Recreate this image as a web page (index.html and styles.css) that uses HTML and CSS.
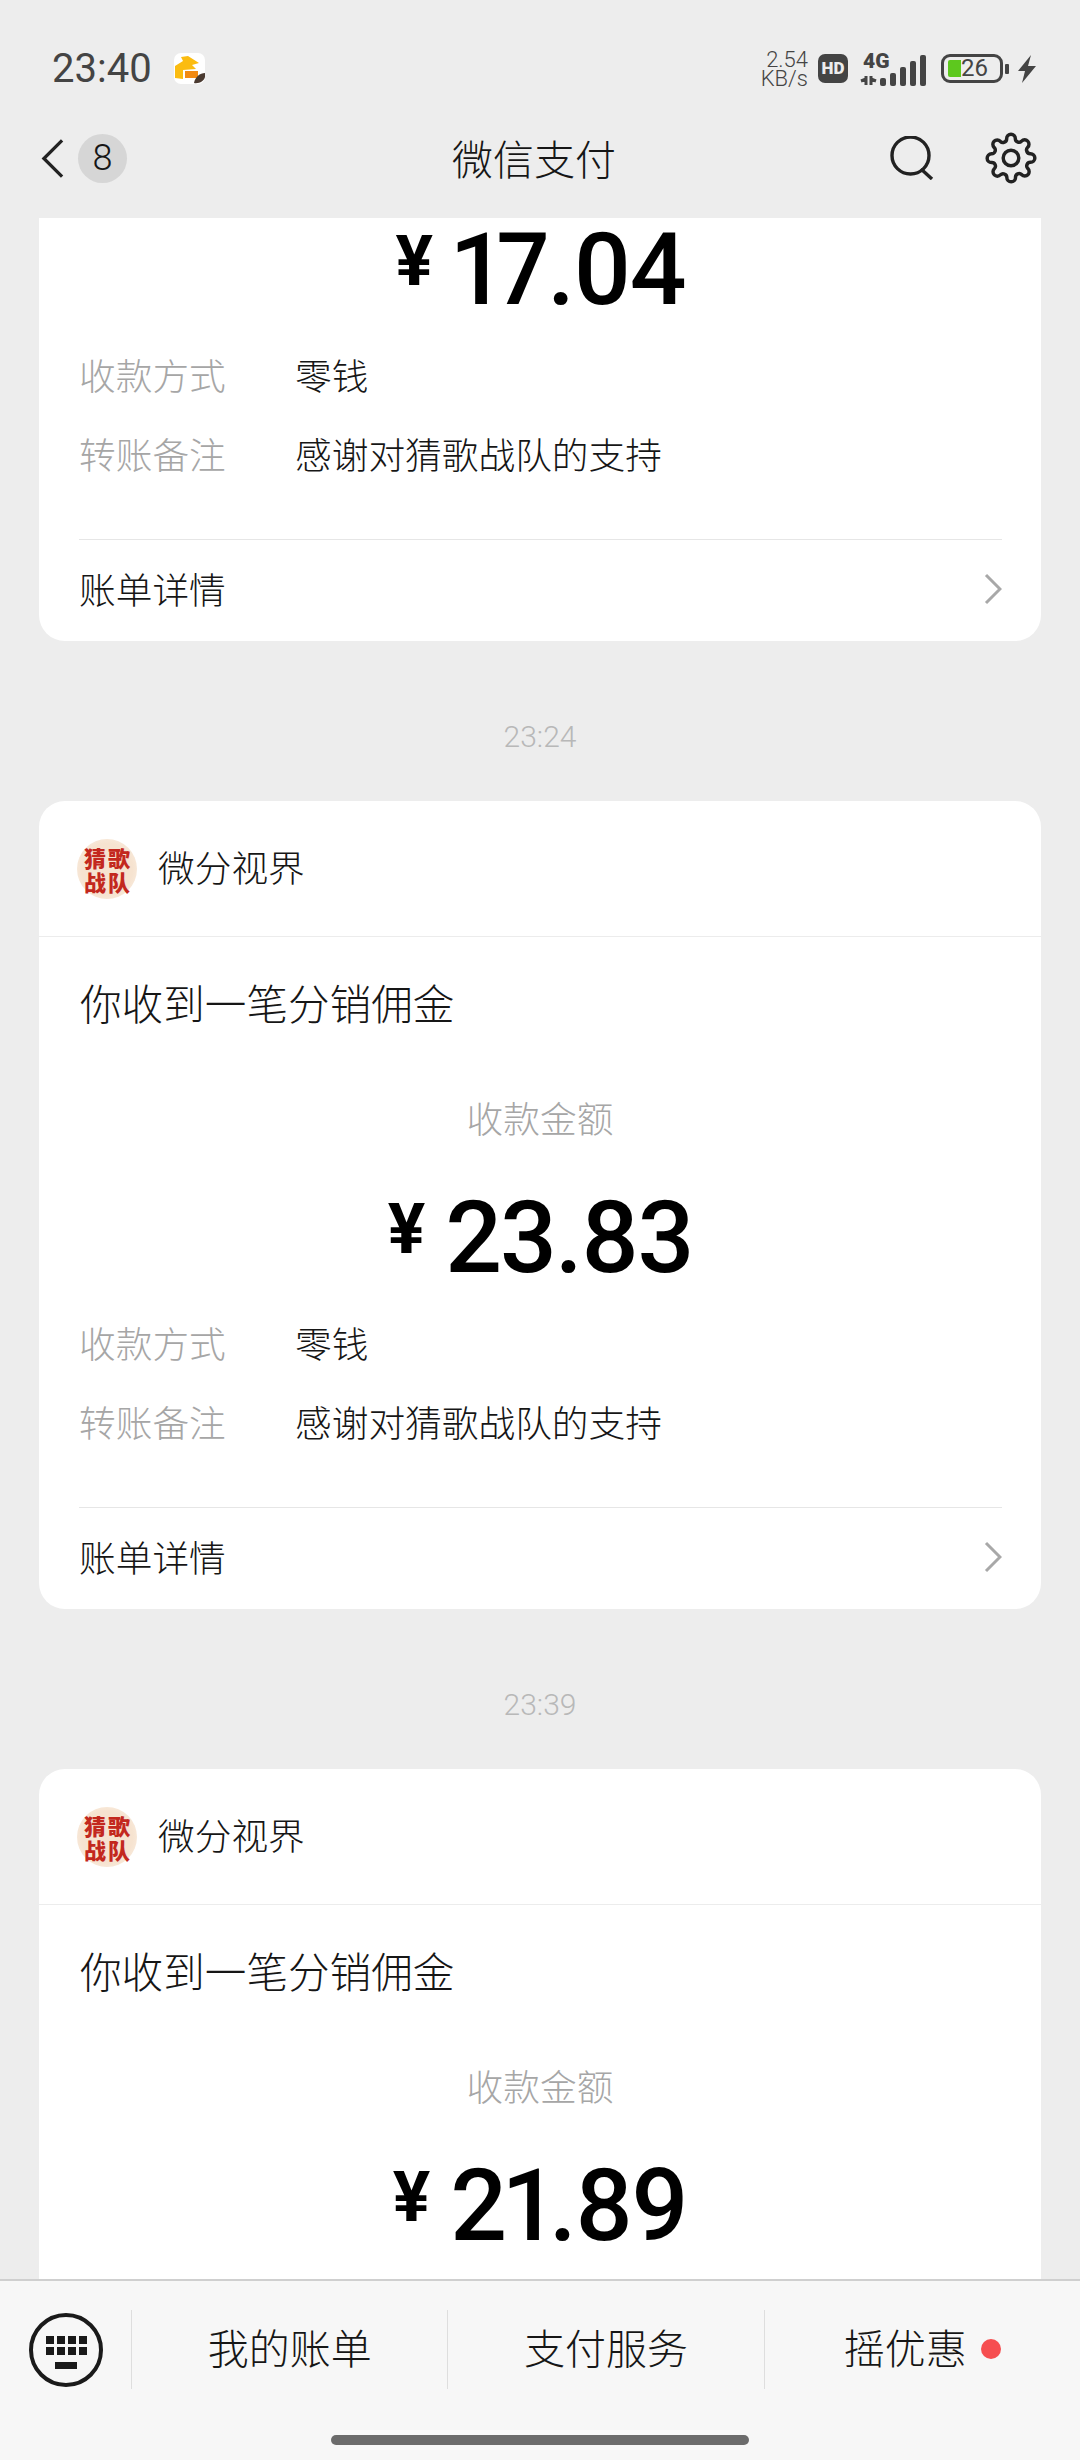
FILE: index.html
```html
<!DOCTYPE html>
<html lang="zh-CN">
<head>
  <meta charset="UTF-8" />
  <meta name="viewport" content="width=device-width, initial-scale=1.0" />
  <title>微信支付</title>
  <link rel="stylesheet" href="styles.css">
</head>
<body>
  <div class="top">
    <div class="status">
      <div class="status-left">
        <span class="clock">23:40</span>
        <svg class="app-icon" viewBox="0 0 31 31">
          <rect width="31" height="31" rx="7" fill="#fff"/>
          <path d="M1 13 L9 8 L7 4 L14 3 L25 10 L18 12 L22 16 L9 17 L9 26 L1 25 Z" fill="#fbbc10"/>
          <rect x="11" y="18" width="13" height="7" fill="#f28a12"/>
          <path d="M20 30 C21 24 26 20 31 20 L31 24 C30 28 25 31 20 30 Z" fill="#4a3a30"/>
        </svg>
      </div>
      <div class="status-right">
        <div class="speed"><span>2.54</span><span>KB/s</span></div>
        <div class="hd">HD</div>
        <svg class="signal" viewBox="0 0 68 34">
          <text x="3" y="16" class="signal-text">4G</text>
          <path d="M6 24 V33 M6 27 L1 29 M11 24 V33 M11 27 L16 29" stroke="#444" stroke-width="3" fill="none"/>
          <rect x="20" y="26" width="6" height="8" rx="2" fill="#444"/>
          <rect x="30" y="21" width="6" height="13" rx="2" fill="#444"/>
          <rect x="40" y="15" width="6" height="19" rx="2" fill="#444"/>
          <rect x="50" y="9" width="6" height="25" rx="2" fill="#444"/>
          <rect x="60" y="3" width="6" height="31" rx="2" fill="#444"/>
        </svg>
        <div class="battery">
          <div class="battery-fill"></div>
          <span class="battery-num">26</span>
        </div>
        <div class="battery-nub"></div>
        <svg class="bolt" viewBox="0 0 19 28">
          <path d="M14 0 L1 16 L8 16 L5 28 L19 11 L11 11 Z" fill="#444"/>
        </svg>
      </div>
    </div>
    <div class="nav">
      <div class="nav-left">
        <svg class="back" viewBox="0 0 24 42">
          <path d="M22 2 L3 21 L22 40" fill="none" stroke="#222" stroke-width="3.4"/>
        </svg>
        <span class="badge">8</span>
      </div>
      <div class="nav-title">微信支付</div>
      <div class="nav-right">
        <svg class="search" viewBox="0 0 44 44">
          <circle cx="20.5" cy="19.5" r="18.5" fill="none" stroke="#222" stroke-width="3.4"/>
          <path d="M31 33 L42 43" stroke="#222" stroke-width="3.4"/>
        </svg>
        <svg class="gear" viewBox="0 0 24 24" fill="none" stroke="#222" stroke-width="1.6">
          <circle cx="12" cy="12" r="3.6"/>
          <path d="M19.4 15a1.65 1.65 0 0 0 .33 1.82l.06.06a2 2 0 0 1 0 2.83 2 2 0 0 1-2.83 0l-.06-.06a1.65 1.65 0 0 0-1.82-.33 1.65 1.65 0 0 0-1 1.51V21a2 2 0 0 1-2 2 2 2 0 0 1-2-2v-.09A1.65 1.65 0 0 0 9 19.4a1.65 1.65 0 0 0-1.82.33l-.06.06a2 2 0 0 1-2.83 0 2 2 0 0 1 0-2.83l.06-.06a1.65 1.65 0 0 0 .33-1.82 1.65 1.65 0 0 0-1.51-1H3a2 2 0 0 1-2-2 2 2 0 0 1 2-2h.09A1.65 1.65 0 0 0 4.6 9a1.65 1.65 0 0 0-.33-1.82l-.06-.06a2 2 0 0 1 0-2.83 2 2 0 0 1 2.83 0l.06.06a1.65 1.65 0 0 0 1.82.33H9a1.65 1.65 0 0 0 1-1.51V3a2 2 0 0 1 2-2 2 2 0 0 1 2 2v.09a1.65 1.65 0 0 0 1 1.51 1.65 1.65 0 0 0 1.82-.33l.06-.06a2 2 0 0 1 2.83 0 2 2 0 0 1 0 2.83l-.06.06a1.65 1.65 0 0 0-.33 1.82V9a1.65 1.65 0 0 0 1.51 1H21a2 2 0 0 1 2 2 2 2 0 0 1-2 2h-.09a1.65 1.65 0 0 0-1.51 1z"/>
        </svg>
      </div>
    </div>
  </div>

  <div class="feed">
    <div class="card first">
      <div class="card-head">
        <div class="avatar"><span>猜</span><span>歌</span><span>战</span><span>队</span></div>
        <span class="sender">微分视界</span>
      </div>
      <div class="card-title">你收到一笔分销佣金</div>
      <div class="amount-label">收款金额</div>
      <div class="amount"><span class="yen">¥</span><span class="digits">17.04</span></div>
      <div class="row"><span class="row-key">收款方式</span><span class="row-val">零钱</span></div>
      <div class="row row-2"><span class="row-key">转账备注</span><span class="row-val">感谢对猜歌战队的支持</span></div>
      <div class="detail">
        <span>账单详情</span>
        <svg class="chevron" viewBox="0 0 18 32"><path d="M2 2 L16 16 L2 30" fill="none" stroke="#a8a8a8" stroke-width="3"/></svg>
      </div>
    </div>

    <div class="time">23:24</div>

    <div class="card">
      <div class="card-head">
        <div class="avatar"><span>猜</span><span>歌</span><span>战</span><span>队</span></div>
        <span class="sender">微分视界</span>
      </div>
      <div class="card-title">你收到一笔分销佣金</div>
      <div class="amount-label">收款金额</div>
      <div class="amount"><span class="yen">¥</span><span class="digits">23.83</span></div>
      <div class="row"><span class="row-key">收款方式</span><span class="row-val">零钱</span></div>
      <div class="row row-2"><span class="row-key">转账备注</span><span class="row-val">感谢对猜歌战队的支持</span></div>
      <div class="detail">
        <span>账单详情</span>
        <svg class="chevron" viewBox="0 0 18 32"><path d="M2 2 L16 16 L2 30" fill="none" stroke="#a8a8a8" stroke-width="3"/></svg>
      </div>
    </div>

    <div class="time">23:39</div>

    <div class="card">
      <div class="card-head">
        <div class="avatar"><span>猜</span><span>歌</span><span>战</span><span>队</span></div>
        <span class="sender">微分视界</span>
      </div>
      <div class="card-title">你收到一笔分销佣金</div>
      <div class="amount-label">收款金额</div>
      <div class="amount"><span class="yen">¥</span><span class="digits">21.89</span></div>
      <div class="row"><span class="row-key">收款方式</span><span class="row-val">零钱</span></div>
    </div>
  </div>

  <div class="bottom">
    <div class="tabs">
      <div class="kb-cell">
        <svg class="keyboard" viewBox="0 0 74 74">
          <circle cx="37" cy="37" r="35" fill="none" stroke="#1a1a1a" stroke-width="4"/>
          <g fill="#1a1a1a">
            <rect x="17" y="23" width="8" height="8"/><rect x="28" y="23" width="8" height="8"/><rect x="39" y="23" width="8" height="8"/><rect x="50" y="23" width="8" height="8"/>
            <rect x="17" y="34" width="8" height="8"/><rect x="28" y="34" width="8" height="8"/><rect x="39" y="34" width="8" height="8"/><rect x="50" y="34" width="8" height="8"/>
            <rect x="26" y="49" width="22" height="7"/>
          </g>
        </svg>
      </div>
      <div class="tab">我的账单</div>
      <div class="tab">支付服务</div>
      <div class="tab">摇优惠<span class="dot"></span></div>
    </div>
    <div class="home-bar"></div>
  </div>
</body>
</html>
```

FILE: styles.css
```css
* {
  box-sizing: border-box;
}
html, body {
  margin: 0;
  height: 100%;
}
body {
  width: 1080px;
  height: 2460px;
  display: flex;
  flex-direction: column;
  overflow: hidden;
  background: #ededed;
  color: #161616;
  font-family: "Noto Sans CJK SC", "Noto Sans", sans-serif;
  font-weight: 300;
}

/* top bars */
.top {
  height: 218px;
  padding-top: 53px;
  background: #ededed;
  position: relative;
  z-index: 1;
}
.status {
  height: 31px;
  padding: 0 44px 0 52px;
  display: flex;
  justify-content: space-between;
  align-items: center;
}
.status-left {
  display: flex;
  align-items: center;
  gap: 22px;
}
.clock {
  font: 400 40px/31px Roboto, sans-serif;
  color: #444;
}
.app-icon {
  width: 31px;
  height: 31px;
}
.status-right {
  display: flex;
  align-items: center;
}
.speed {
  display: flex;
  flex-direction: column;
  align-items: flex-end;
  font: 300 22px/19px Roboto, sans-serif;
  color: #444;
  margin-right: 10px;
}
.hd {
  width: 30px;
  height: 29px;
  background: #444;
  border-radius: 7px;
  color: #ededed;
  font: 900 17px/29px Roboto, sans-serif;
  text-align: center;
  margin-right: 12px;
}
.signal {
  width: 68px;
  height: 34px;
  margin-right: 13px;
}
.signal-text {
  font: 900 21px Roboto, sans-serif;
  fill: #444;
}
.battery {
  width: 62px;
  height: 29px;
  border: 3px solid #444;
  border-radius: 9px;
  display: flex;
  align-items: center;
  padding-left: 4px;
}
.battery-fill {
  width: 13px;
  height: 17px;
  background: #5dc81e;
  border-radius: 2px 0 0 2px;
}
.battery-num {
  font: 400 24px/23px Roboto, sans-serif;
  color: #444;
}
.battery-nub {
  width: 4px;
  height: 10px;
  background: #444;
  border-radius: 1px;
  margin: 0 8px 0 2px;
}
.bolt {
  width: 19px;
  height: 28px;
}
.nav {
  margin-top: 34px;
  height: 80px;
  padding: 0 43px 0 41px;
  display: grid;
  grid-template-columns: 1fr auto 1fr;
  align-items: center;
}
.nav-left {
  display: flex;
  align-items: center;
  gap: 14px;
}
.back {
  width: 23px;
  height: 41px;
}
.badge {
  width: 49px;
  height: 49px;
  border-radius: 50%;
  background: #d6d6d6;
  font: 300 36px/49px Roboto, sans-serif;
  text-align: center;
}
.nav-title {
  font-size: 41px;
  line-height: 60px;
  margin-right: 10px;
  padding-bottom: 3px;
}
.nav-right {
  display: flex;
  justify-content: flex-end;
  align-items: center;
  gap: 51px;
}
.search {
  width: 44px;
  height: 44px;
}
.gear {
  width: 52px;
  height: 52px;
}

/* message list */
.feed {
  flex: 1;
  min-height: 0;
  overflow: hidden;
  padding: 0 39px;
}
.card {
  height: 808px;
  background: #fff;
  border-radius: 26px;
  overflow: hidden;
}
.card.first {
  margin-top: -385px;
}
.card-head {
  height: 136px;
  padding-left: 38px;
  display: flex;
  align-items: center;
  gap: 21px;
  border-bottom: 1px solid #ececec;
}
.avatar {
  width: 60px;
  height: 60px;
  border-radius: 50%;
  background: radial-gradient(circle, #f6e3d0 60%, #fbf3ea 100%);
  color: #c3281e;
  display: grid;
  grid-template-columns: 1fr 1fr;
  place-items: center;
  padding: 6px 6px;
  font-size: 22px;
  line-height: 24px;
  font-weight: 900;
}
.sender {
  font-size: 36.7px;
  line-height: 50px;
  padding-bottom: 5px;
}
.card-title {
  margin: 35px 0 0 41px;
  font-size: 41.6px;
  line-height: 60px;
}
.amount-label {
  margin-top: 60px;
  font-size: 36.7px;
  line-height: 50px;
  text-align: center;
  color: #a6a6a6;
}
.amount {
  margin-top: 44px;
  height: 100px;
  display: flex;
  justify-content: center;
  gap: 20px;
  color: #000;
  font-family: Roboto, sans-serif;
}
.yen {
  font-size: 70px;
  font-weight: 700;
  line-height: 86px;
}
.digits {
  font-size: 100px;
  font-weight: 500;
  line-height: 104px;
  letter-spacing: -2px;
  font-variant-numeric: proportional-nums;
}
.row {
  margin: 31px 0 0 40px;
  display: flex;
  font-size: 36.7px;
  line-height: 50px;
}
.row-2 {
  margin-top: 29px;
}
.row-key {
  width: 216px;
  color: #a6a6a6;
}
.detail {
  margin: 61px 39px 0 40px;
  height: 100px;
  padding-bottom: 3px;
  border-top: 1px solid #e6e6e6;
  display: flex;
  justify-content: space-between;
  align-items: center;
  font-size: 36.7px;
}
.chevron {
  width: 18px;
  height: 32px;
  margin-top: 2px;
}
.time {
  height: 160px;
  font: 300 30px/192px Roboto, sans-serif;
  text-align: center;
  color: #b8b8b8;
}

/* bottom menu */
.bottom {
  height: 181px;
  padding-top: 29px;
  background: #f7f7f7;
  border-top: 2px solid #cfcfcf;
  position: relative;
}
.tabs {
  height: 79px;
  display: grid;
  grid-template-columns: 131px 1fr 1fr 1fr;
}
.kb-cell {
  display: flex;
  align-items: center;
  padding-left: 29px;
}
.keyboard {
  width: 74px;
  height: 74px;
}
.tab {
  border-left: 1px solid #dedede;
  display: flex;
  justify-content: center;
  align-items: center;
  font-size: 41px;
  padding-bottom: 8px;
}
.dot {
  width: 20px;
  height: 20px;
  margin: 7px 0 0 14px;
  border-radius: 50%;
  background: #f64e50;
}
.home-bar {
  width: 418px;
  height: 10px;
  margin: 46px auto 0;
  background: #6b6b6b;
  border-radius: 5px;
}
```
